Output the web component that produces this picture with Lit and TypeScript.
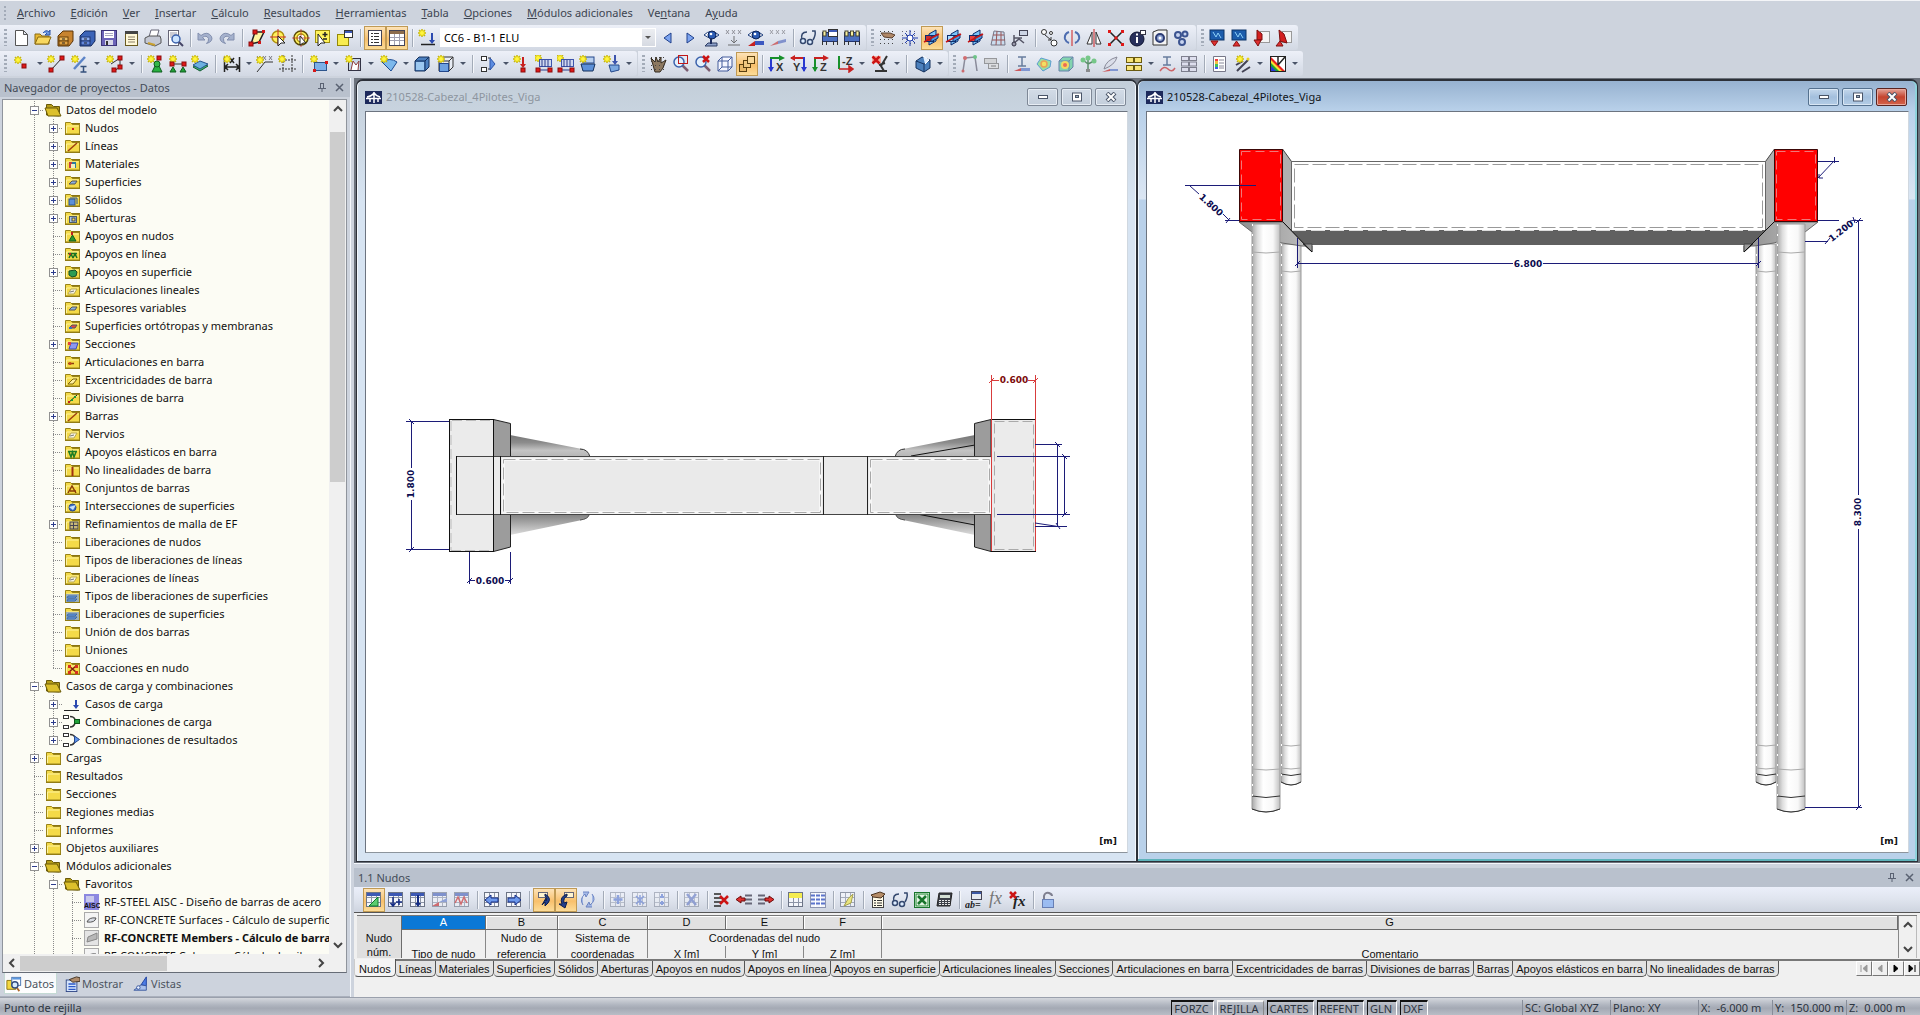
import { LitElement, html, css, svg, nothing } from 'lit';
import { customElement, property } from 'lit/decorators.js';
import { classMap } from 'lit/directives/class-map.js';
import { unsafeSVG } from 'lit/directives/unsafe-svg.js';

/* ---------- icon primitives, all on an 18 x 18 grid ---------- */
const p = (d: string, stroke = '#333', fill = 'none', w = 1) =>
  `<path d="${d}" stroke="${stroke}" fill="${fill}" stroke-width="${w}"/>`;
const b = (x: number, y: number, w: number, h: number, fill: string, stroke = 'none') =>
  `<rect x="${x}" y="${y}" width="${w}" height="${h}" fill="${fill}" stroke="${stroke}"/>`;
const c = (x: number, y: number, r: number, fill: string, stroke = 'none', w = 1) =>
  `<circle cx="${x}" cy="${y}" r="${r}" fill="${fill}" stroke="${stroke}" stroke-width="${w}"/>`;
const fade = (s: string, o = 0.45) => `<g opacity="${o}">${s}</g>`;
const star = (x = 4, y = 4) =>
  p(`M${x} ${y - 4}v8M${x - 4} ${y}h8M${x - 3} ${y - 3}l6 6M${x + 3} ${y - 3}l-6 6`, '#c4b414', 'none', 1.5) +
  c(x, y, 2.5, '#fff540', '#e4d410');
const dot = (x: number, y: number) => b(x - 2, y - 2, 4, 4, '#e01818', '#8c0c0c');
const arrow = (x: number, y: number, h: number, col = '#2b49b0') =>
  p(`M${x} ${y}v${h - 3}`, col, 'none', 2) + p(`M${x - 3} ${y + h - 4}h6l-3 4z`, 'none', col);
const supports = (col = '#22a038') => p('M1 17l3-5 3 5zM11 17l3-5 3 5z', '#0c5c1c', col);
const grid = b(1.5, 1.5, 14, 14, '#f4f6fb', '#6c7486') + p('M2 6.5h13M2 11.5h13M6.5 2v13M11.5 2v13', '#8c94a6');
const gridHead = grid + b(2, 2, 13, 3, '#3c58b4');
const lens = (x = 7, y = 7) => p(`M${x + 3} ${y + 3}l6 6`, '#7c5c70', 'none', 2.5) + c(x, y, 5, '#e4f0fc', '#3c62ac', 1.5);
const redX = (x: number, y: number, s = 4) => p(`M${x - s} ${y - s}l${s * 2} ${s * 2}M${x + s} ${y - s}l${-s * 2} ${s * 2}`, '#cc1414', 'none', 2.5);
const eye = p('M1 6q7-7 15 0q-7 6-15 0z', '#1c3c7c', '#fff') + c(9, 6, 4, '#2c5cb4', '#0c2458') + c(8, 5, 1.3, '#fff');
const xxx = p('M1 1l3 4M4 1l-3 4M7 1l3 4M10 1l-3 4M13 1l3 4M16 1l-3 4', '#7c7c84');
const glasses = p('M3 11q-2-8 5-8M14 11q3-5 2-9l-3 0', '#34486e', 'none', 1.5) + c(4, 12, 2.5, '#dcecff', '#34486e', 1.5) + c(11, 13, 2.5, '#dcecff', '#34486e', 1.5);
const cube = (col: string, edge: string) =>
  p('M2 6l4-4h10v10l-4 4h-10z', edge, col) + p('M2 6h10v10M12 6l4-4', edge);
const hash = (col = '#444') => p('M1 2.5h16M1 6.5h16M1 10.5h16M1 14.5h16', col, 'none', 1).replace('/>', ' stroke-dasharray="1 3"/>');
const planes = (front: string) =>
  p('M6 5l7-4v11l-7 4z', '#0c2c6c', '#7cc4f8') + b(2.5, 6.5, 8, 6, front, '#0c2c6c') + p('M8 8l7-3v4l-7 4z', '#0c2c6c', '#4c98e0') + p('M1 13l15-8', '#c81414', 'none', 1.5);
const cal = b(1.5, 3.5, 15, 9, '#4c70c0', '#22336c') + b(2, 2, 3, 5, '#f8f0a0', '#443') + b(7.5, 2, 3, 5, '#f8f0a0', '#443') + b(13, 2, 3, 5, '#f8f0a0', '#443') + p('M1.5 12v4M5.5 12v4M12.5 12v4M16.5 12v4', '#333');
const axes = (h: string, v: string, l: string, right = false) =>
  (right
    ? p('M1 3h13', h, 'none', 2) + p('M5 0l-5 3 5 3z', 'none', h) + p('M14 2v14', v, 'none', 2) + p('M11 12h6l-3 5z', 'none', v)
    : p('M3 2v14', v, 'none', 2) + p('M0 12h6l-3 5z', 'none', v) + p('M2 3h13', h, 'none', 2) + p('M11 0l6 3-6 3z', 'none', h)) +
  `<text x="${right ? 3 : 8}" y="16" font-family="Liberation Sans" font-size="11" font-weight="700" fill="#333">${l}</text>`;
const book = b(1, 1, 14, 10, '#1c5cac', '#0c3468') + p('M4 3l3 5 2-4 3 5', '#8cd0f8');

const ICONS: Record<string, string> = {
  blank: p('M3.5 1.5h8l4 4v11h-12zM11.5 1.5v4h4', '#555', '#fff'),
  open: p('M1 15V5h5l2 2h7v8z', '#8a6a10', '#e8b830') + p('M1 15l3-7h13l-3 7z', '#8a6a10', '#f8d860') + p('M9 4q3-4 6-1l1-2v5h-5l2-2', '#2c54a8', '#6c98e0'),
  cabA: p('M2 7l5-5h10v10l-4 5H2z', '#5a3408', '#c88430') + b(3, 8, 9, 4, '#f0bc60', '#6a4008') + b(3, 12, 9, 4, '#e0a040', '#6a4008') + p('M6 10h3M6 14h3', '#222'),
  cabB: p('M2 7l5-5h10v10l-4 5H2z', '#14285c', '#3c64b8') + b(3, 8, 9, 4, '#8cacf0', '#1c3470') + b(3, 12, 9, 4, '#6488dc', '#1c3470') + p('M6 10h3M6 14h3', '#222'),
  save: b(1.5, 1.5, 15, 15, '#6c64b8', '#3c3478') + b(4, 2, 10, 7, '#fff') + b(5, 11, 8, 5, '#d8d8e8') + b(6, 12, 2, 4, '#333') + p('M5 4.5h8M5 6.5h8', '#a8a8c0'),
  clip: b(3.5, 3.5, 12, 13, '#fff8d8', '#6a5a20') + p('M3 3.5h13', '#444', 'none', 3) + p('M6 8h7M6 10.5h7M6 13h7', '#8c8068'),
  print: p('M5 8l2-7h8l-2 7', '#667', '#fff') + p('M1 9l4-2h11l1 3v4l-6 3-10-3z', '#555', '#c4c8d4') + p('M4 14l7 2', '#c8a030', 'none', 2),
  preview: b(2.5, 1.5, 10, 15, '#fff', '#667') + p('M4 4h7M4 6h7M4 8h4', '#99a') + c(10, 10, 4, '#cce4ff', '#3c62ac', 1.5) + p('M13 13l4 4', '#446', 'none', 2),
  undo: fade(p('M2 4v7h7l-2.500-2.500q4-3 6 1q.5 3-2 5q7-2 5-7q-4-6-10.500-1z', '#5c6c94', '#8c9cc0'), 0.7),
  redo: fade(p('M16 4v7h-7l2.500-2.500q-4-3-6 1q-.5 3 2 5q-7-2-5-7q4-6 10.500-1z', '#5c6c94', '#8c9cc0'), 0.7),
  quad: p('M3 15l4-12 9 0-5 10z', '#222', '#fff6a0', 1.5) + dot(3, 15) + dot(7, 3) + b(14, 1, 3, 3, '#d01818') + b(10, 12, 3, 3, '#d01818'),
  target: c(8, 8, 6, '#fff35c', '#b09010', 1.5) + p('M8 0v16M0 8h16', '#c83030') + p('M8 7v10l3-3h4z', '#222', '#fff'),
  ring: c(9, 9, 7, '#fff35c', '#5c4c08', 1.5) + c(9, 9, 4, '#fff', '#b09010', 1.5) + p('M9 0v18M0 9h18', '#c83030', 'none', 0.7) + p('M8 7v9l3-2h3z', '#222', '#fff'),
  plusSel: b(1.5, 1.5, 14, 12, '#fff35c', '#a09010') + p('M11 3v5M8.500 5.500h5M9 10h4', '#222', 'none', 1.5) + p('M4 5v12l3-3h4z', '#222', '#fff'),
  folderWin: b(1.5, 5.5, 11, 11, '#f8ec50', '#948808') + b(8.5, 1.5, 8, 7, '#fff', '#333') + b(9, 2, 7, 2, '#3c58b4'),
  list: b(2.5, 1.5, 13, 15, '#fff', '#445') + p('M5 4.500h2M8 4.500h5M5 7.500h2M8 7.500h5M5 10.500h2M8 10.500h5M5 13.500h2M8 13.500h5', '#333'),
  tableA: b(1.5, 1.5, 15, 15, '#fff', '#445') + b(2, 2, 14, 3, '#8c6c4c') + p('M2 8.500h14M2 11.500h14M6.500 5v11M11.500 5v11', '#a0a0b0'),
  loadNew: star(4, 4) + p('M3 15.500h14', '#222', 'none', 1.5) + arrow(14, 4, 11),
  prev: p('M12 4v10l-7-5z', '#20408c', '#7ca4f0'),
  next: p('M6 4v10l7-5z', '#20408c', '#7ca4f0'),
  eyeLoad: eye + p('M5 14h9v3h-12z', '#2c3c64', '#8ca0c8') + p('M8 9v6', '#1c2c5c', 'none', 2),
  xxxA: fade(xxx + p('M3 16h12M9 7v7l-3-3M9 14l3-3', '#555'), 0.8),
  eyeRes: eye + p('M1 17l7-5v5z', 'none', '#c82020') + p('M8 12h9v4l-9 0z', 'none', '#3c58c0'),
  xxxB: fade(xxx + p('M1 17l8-5v3z', 'none', '#c83c3c') + p('M9 12l8-2v3l-8 2z', 'none', '#5c70c0'), 0.7),
  glasses,
  calWin: cal + b(7.5, 0.5, 9, 7, '#fff', '#333') + b(8, 1, 8, 2, '#3c58b4'),
  cal,
  handGrid: hash() + p('M2 4h9l5 2-3 3-8-1z', '#5a4030', '#b08868'),
  gridStar: hash('#667') + p('M9 1v16M1 9h16M4 4l10 10M14 4l-10 10', '#2440b0') + c(9, 9, 3, '#fff', '#2440b0'),
  planeA: planes('#c83030'),
  planeB: planes('#a8dcff'),
  planeC: planes('#e84040'),
  meshP: fade(p('M5 2l10 1 1 13-14 0z', '#667', '#c8dcf0') + p('M4 6h11M3 11h13M8 2l-1 14M12 3l0 13', '#8c3c3c'), 0.85),
  flow: b(8.5, 1.5, 8, 5, '#ccd4e4', '#445') + p('M3 6v9M3 9h8M2 15l6-5 5 4', '#556', 'none', 1.5) + c(3, 15, 2, '#99a', '#334'),
  moveC: c(3, 3, 2.5, '#fff', '#333') + c(13, 14, 3, '#fff', '#333') + c(10, 4, 1.5, '#fff', '#333') + p('M4 6l6 5M10 11l-3 0M10 11v-3', '#333'),
  rotate: p('M6 3q-5 2-4 7q1 3 4 4M12 3q5 2 4 7q-1 3-4 4', '#4c6cb0', 'none', 2) + p('M9 1v16', '#d02020', 'none', 1),
  mirror: p('M7 3v12h-5zM11 3v12h5z', '#333', '#fff') + p('M9 0v18', '#d02020'),
  xdots: p('M3 3l12 12M15 3l-12 12', '#222', 'none', 1.5) + [[1, 1], [14, 1], [1, 14], [14, 14], [7.5, 7.5]].map(([x, y]) => b(x, y, 3, 3, '#e01818')).join(''),
  info: c(8, 10, 7, '#28305c', '#0c1230') + p('M8 8v6M8 4.500v2', '#fff', 'none', 2) + b(11.5, 1.5, 5, 4, '#fff', '#334'),
  sheetGear: p('M2 3l5-2h9v15H2z', '#333', '#f4f4f4') + c(9, 9, 4, '#8ca0d0', '#2c3c74', 2) + c(9, 9, 1.5, '#fff'),
  gears: c(5, 6, 3, '#c8d4f0', '#3c5490', 2) + c(12, 5, 2.5, '#c8d4f0', '#3c5490', 2) + c(9, 13, 3, '#c8d4f0', '#3c5490', 2),
  bookD: book + p('M2 12h7l-3.500 5z', '#8c1010', '#e03030'),
  bookU: book + p('M2 17h7l-3.500-5z', '#8c1010', '#e03030'),
  cadD: b(7.5, 2.5, 9, 11, '#f4f4f4', '#999') + p('M4 1l5 4v6l-5 0z', '#7c1010', '#d42020') + p('M1 11h7l-3 6z', '#7c1010', '#e03030'),
  cadU: b(7.5, 2.5, 9, 11, '#f4f4f4', '#999') + p('M4 1l5 4 3 9-7-2z', '#7c1010', '#d42020') + p('M1 17h7l-3-5z', '#7c1010', '#e03030'),
  node: star(4, 5) + dot(10, 11),
  line: star(4, 4) + p('M4 15L15 3', '#222') + dot(4, 15) + dot(15, 3),
  member: star(4, 4) + p('M3 14L14 2', '#5c84c8', 'none', 2.5) + p('M9.500 11.500h6M9.500 17h6M12.500 11.500v5.500', '#34507c', 'none', 1.5),
  poly: star(4, 4) + p('M5 9l9-6v9l-6 4', '#333') + dot(14, 3) + dot(14, 12) + dot(8, 15),
  nodeSup: p('M10 7l5 10h-10z', '#0c5c1c', '#28b040') + c(10, 9, 3, '#34b848', '#0c5c1c') + star(4, 4) + dot(12, 3),
  lineSup: star(4, 4) + p('M3 9h12', '#333') + dot(3, 9) + dot(15, 9) + supports(),
  surfSup: p('M2 12l7-4 8 3-8 5z', '#145c34', '#3cb46c') + p('M2 10l7-4 8 3-8 5z', '#24548c', '#6cb0e0') + star(4, 4),
  dimH: p('M1.500 2v15M16.500 2v15M2 12h14M5 9l-3 3 3 3M13 9l3 3-3 3', '#222', 'none', 1.5) + p('M7 3l4 5M11 3l-4 5', '#222', 'none', 1.5) + star(4, 4),
  dimNote: xxx + p('M1 17l8-10h8', '#333') + star(4, 5),
  dashBox: p('M5 0v18M14 0v18M1 5h17M1 14h17', '#333').replace('/>', ' stroke-dasharray="2 1"/>') + star(4, 4),
  surf: star(4, 4) + b(4.5, 7.5, 12, 8, '#7cb0e8', '#2c548c') + b(3, 14, 3, 3, '#d81818') + b(15, 6, 3, 3, '#d81818'),
  opening: b(3.5, 3.5, 12, 12, '#c8d8e8', '#334') + p('M6 15l2-9 3 4 3-4-1 9', '#8c3c3c', '#fff') + star(4, 4),
  wedge: p('M2 7q8-5 15 0l-6 9z', '#1c4c94', '#7cb8ec') + star(4, 4),
  solid: cube('#4c80c0', '#14305c') + b(3, 7, 8, 8, '#9cc8f0'),
  solidNew: cube('#e8ecf4', '#333') + b(2.5, 8.5, 9, 8, '#6ca0e0', '#24488c') + star(4, 4),
  connect: b(1.5, 1.5, 5, 4, '#fff', '#333') + b(1.5, 12.5, 5, 4, '#fff', '#333') + p('M8 3h3M8 14h3', '#333') + p('M10 3l5 6-5 6z', '#2c54a8', '#5c8ce0', 1),
  loadPt: star(4, 4) + arrow(10, 2, 11, '#c82020') + dot(10, 15),
  loadLn: star(3, 3) + b(4.5, 4.5, 12, 7, '#d0d8f0', '#3c54ac') + p('M4 15h12M7 5v7M10 5v7M13 5v7', '#2c3c8c') + dot(3, 15) + dot(15, 15),
  loadBox: b(4, 2, 11, 6, '#b8d0f0', '#24488c') + p('M2 9h14l-2 7h-10z', '#14305c', '#5c90d8') + star(4, 4),
  loadSol: star(4, 4) + arrow(12, 0, 10, '#3c54ac') + p('M6 10h10v5l-8 2z', '#24488c', '#7ca8e0'),
  hand: p('M1 3l4 4 1-5 2 5 3-5 0 6 5-3-3 8-3 4h-5z', '#33291c', '#8c7860') + hash('#444'),
  zoomWin: lens() + b(6.5, 0.5, 9, 8, 'none', '#c01818'),
  zoomX: lens() + redX(12, 4, 3),
  wire: cube('#f4f6ff', '#445c9c') + p('M6 2v10h10M6 12l-4 4', '#445c9c'),
  cubes3: b(1.5, 9.5, 7, 7, '#e8b868', '#5a4010') + b(5.5, 5.5, 7, 7, '#f0c880', '#5a4010') + b(9.5, 1.5, 7, 7, '#f8d898', '#5a4010'),
  axX: axes('#18902c', '#2838d0', 'X'),
  axY: axes('#c82020', '#2838d0', 'Y', true),
  axZ: axes('#c82020', '#18902c', 'Z'),
  axmZ: p('M3 1v13', '#18902c', 'none', 2) + p('M3 14h12M13 11l4 3-4 3z', '#c82020', '#c82020', 1.5) + `<text x="6" y="10" font-family="Liberation Sans" font-size="11" font-weight="700" fill="#333">-Z</text>`,
  cutX: p('M16 1l-6 10 3 5M4 16h12M8 10l6-2', '#333', 'none', 2) + b(1, 1, 9, 7, '#f8b0a0') + redX(5, 5, 3.5),
  view3d: p('M2 6l6-4 8 3v8l-6 4-8-4z', '#14305c', '#4c80bc') + p('M2 6l8 3v8M10 9l6-4', '#14305c', 'none') + p('M9 1l6 4-4 4', '#fff', '#dcecff'),
  frame: fade(p('M2 16L4 3l10-1 2 14', '#667', 'none', 1.5) + c(4, 3, 2, '#c83c3c') + c(14, 2, 2, '#3cb45c') + c(2, 16, 1.5, '#c83c3c'), 0.7),
  tag: fade(b(1.5, 3.5, 12, 5, '#ccc', '#777') + b(5.5, 8.5, 10, 5, '#ddd', '#777') + p('M8 11h5', '#555'), 0.7),
  resI: fade(p('M5 2h8M5 11h8M9 2v9', '#34507c', 'none', 1.5) + p('M1 16l7-3v3z', 'none', '#c82020') + p('M8 13h9v3h-9z', 'none', '#5c78c8'), 0.7),
  resS: fade(p('M2 9l4-6 10 3-1 6-7 4z', '#3c8ccc', '#8ce08c') + c(9, 9, 3, '#f8e040', '#f09030', 1.5), 0.8),
  resV: fade(cube('#6cd0a0', '#4c6c9c') + c(8, 10, 3, '#f05030', '#f8d840', 2), 0.8),
  tree4: fade(p('M9 16V5M9 9l-5-4M9 9l6-3', '#3c7c4c', 'none', 1.5) + c(4, 5, 2.5, '#5cc070') + c(9, 3, 2.5, '#5cc070') + c(15, 6, 2.5, '#5cc070') + b(7, 14, 4, 3, '#777'), 0.8),
  wing: fade(p('M3 14q2-9 13-12-2 8-13 12z', '#667', '#d8dce8') + p('M1 17l8-3v2z', 'none', '#c82020') + p('M9 14h8v2h-8z', 'none', '#5c78c8'), 0.7),
  boxes4: [[1.5, 2.5], [9.5, 2.5], [1.5, 10.5], [9.5, 10.5]].map(([x, y]) => b(x, y, 7, 5, '#f8e478', '#6a5a10')).join(''),
  resJ: fade(p('M5 2h8M5 10h8M9 2v8', '#34507c', 'none', 1.5) + p('M2 16q4-6 8-2t7-1', '#c83030', 'none', 1.5), 0.7),
  wins: fade([1.5, 7, 12.5].map((y) => b(1.5, y, 7, 4, '#dde', '#556') + b(9.5, y, 7, 4, '#dde', '#556')).join(''), 0.7),
  sheetC: p('M3.500 1.500h12v15h-12z', '#778', '#fff') + b(5, 4, 3, 2, '#f04040') + b(5, 6, 3, 3, '#f0c040') + b(5, 9, 3, 3, '#40c060') + b(5, 12, 3, 2, '#4060f0') + p('M9 5h5M9 8h5M9 11h5M9 13h5', '#889'),
  wand: p('M3 16l11-11M8 17l8-5M2 10l7-4', '#445', 'none', 2) + star(6, 4) + c(14, 4, 1.5, '#e8d020'),
  rainbow: b(1.5, 1.5, 15, 15, '#fff', '#222') + p('M2 2l14 14h-5L2 6z', 'none', '#e82020') + p('M2 5l11 11h-4L2 9z', 'none', '#f8e030') + p('M2 8l8 8H6L2 12z', 'none', '#18a838') + p('M2 11l5 5H2z', 'none', '#2838d8') + p('M9 10l7-8M9 2v8', '#222', 'none', 1.5),
  tEdit: gridHead + p('M4 15L13 6v9z', '#0c7c28', '#5ccc70'),
  tIns: gridHead + p('M6 6v9M3.500 12l2.500 3 2.500-3M9 11h6M12 8v6', '#142c84', 'none', 1.5),
  tDown: gridHead + arrow(9, 4, 12, '#142c84'),
  tRes: fade(gridHead + p('M1 15l7-4v4z', 'none', '#c82020') + p('M8 11l8-4v4z', 'none', '#5c78c8'), 0.6),
  tWave: fade(gridHead + p('M2 12l3-6 3 7 3-7 3 6', '#c82020', 'none', 1.5), 0.6),
  tLeft: grid + p('M15 7v4h-7v3l-6-5 6-5v3z', '#142c84', '#6c98ec'),
  tRight: grid + p('M3 7v4h7v3l6-5-6-5v3z', '#142c84', '#6c98ec'),
  tCurveA: b(3.5, 1.5, 9, 5, '#fff4d0', '#667') + p('M10 3q7 4 3 9l-3 3 0-4 -3 3 4-7 0 3q2-3-1-5z', '#0c1c4c', '#24408c'),
  tCurveB: b(7.5, 1.5, 9, 5, '#fff4d0', '#667') + p('M10 3q-8 3-5 10h-3l6 4 2-6-3 1q-1-5 3-7z', '#0c1c4c', '#24408c'),
  tSync: fade(p('M4 14q-4-6 2-11l1 3 3-5h-6M13 3q5 6-2 11l-1-3-3 5h6', '#3c5cb0', '#8ca8e4'), 0.7),
  tA: fade(grid + p('M9 4v9M4.500 8.500h9', '#2c54c8', 'none', 2.5)),
  tB: fade(grid + p('M5 5l8 8M13 5l-8 8M9 4v10', '#2c54c8', 'none', 1.5)),
  tC: fade(grid + p('M9 3v4M9 10v4M7 6h4M7 12h4', '#2c54c8', 'none', 2)),
  tX: fade(grid + p('M4 3l9 11M13 3l-9 11', '#3450b4', 'none', 2.5)),
  tDel: fade(p('M1 3h7M1 7h7M1 11h7M1 15h7', '#333', 'none', 2), 0.8) + redX(11, 9, 4),
  tDelL: p('M10 4.500h7M10 8.500h7M10 12.500h7', '#667', 'none', 2) + p('M10 7v3h-4v2l-5-3.500 5-3.500v2z', '#6c0c0c', '#e03030'),
  tDelR: p('M1 4.500h7M1 8.500h7M1 12.500h7', '#667', 'none', 2) + p('M8 7v3h4v2l5-3.500-5-3.500v2z', '#6c0c0c', '#e03030'),
  tYel: grid + b(2, 2, 13, 5, '#f4ec50'),
  tBlu: b(1.5, 1.5, 15, 15, '#f4f6fb', '#8c94b0') + p('M2 4.500h14M2 8.500h14M2 12.500h14', '#5c74cc', 'none', 2) + p('M6.500 2v14M11.500 2v14', '#fff'),
  tPen: fade(grid + p('M5 15q4-9 9-12l-2 9z', '#8c8410', '#f0e850'), 0.7),
  tProp: b(3.5, 4.5, 11, 12, '#fffbe8', '#444') + p('M5 9.500h2M8 9.500h5M5 12h2M8 12h5M5 14.500h2M8 14.500h5', '#333') + p('M2 4l9-3 5 2-4 4-8-1z', '#4c3420', '#b48c68'),
  excel: b(1.5, 1.5, 15, 15, '#fff', '#18742c') + b(3, 3, 12, 12, '#e4f4e4', '#18842c') + p('M5 5l8 8M13 5l-8 8', '#18742c', 'none', 2.5),
  calc: p('M4 2h13l-2 13h-13z', '#222', '#3c4048') + b(5, 4, 10, 3, '#d4e0d4') + p('M4 9.500h11M4 11.500h11M4 13.500h11', '#e8e8e8').replace('/>', ' stroke-dasharray="2 1"/>'),
  abc: b(6.5, 0.5, 10, 8, '#e4e8f0', '#445') + b(7, 1, 9, 2, '#3c58a4') + `<text x="0" y="17" font-family="Liberation Serif" font-style="italic" font-weight="700" font-size="10" fill="#222">ab=</text>`,
  fx: `<text x="2" y="13" font-family="Liberation Serif" font-style="italic" font-size="18" fill="#777">fx</text>`,
  fxX: `<text x="4" y="15" font-family="Liberation Serif" font-style="italic" font-weight="700" font-size="15" fill="#222">fx</text>` + redX(4, 4, 3),
  lock: fade(p('M5 8V5q1-4 5-3 3 1 3 3', '#667', 'none', 2) + b(3.5, 8.5, 11, 8, '#8cb4f4', '#4c68a8'), 0.8),
  tabData: p('M1 5h5l1 2h4v8H1z', '#8a7008', '#f4d840') + b(6.5, 1.5, 10, 9, '#fff', '#3c6cac') + b(7, 2, 9, 2, '#5c98e0') + p('M12 13l3 4', '#b06828', 'none', 2) + c(10, 10, 3.5, '#d8ecff', '#334c7c', 1.5),
  tabShow: b(2.5, 4.5, 12, 13, '#d4e4fc', '#2c4484') + p('M5 9h8M5 12h8M5 15h8', '#2c58c8', 'none', 1.5) + p('M6 4l8-3 4 1v4l-8 1z', '#3c2c1c', '#b08c6c'),
  tabView: p('M9 10l6-9v10z', '#14389c', '#4c7ce4') + p('M1 16l8-6 6 1v5h-13z', '#34549c', '#a8c0ec') + c(6, 13, 2, '#e8f0ff', '#34549c'),
};

/* ---------- folder marks for the tree ---------- */
const folder = (mark = '') => b(2, 4, 15, 12, '#8a7410') + p('M2.500 15V3.500h5l2 2h7V15z', '#9a8418', '#f4da48') + p('M3.500 14V7h12', '#fdf3a0') + mark;
const openFolder = p('M2.500 14V3.500h5l2 2h6V15z', '#6a5a08', '#b49c18') + p('M4 15L1 7h12l4 8z', '#6a5a08', '#dcc02c');
const surfMark = (f: string) => p('M6 11l3-3h5l-2 3z', '#555', f);
const MARKS: Record<string, string> = {
  open: openFolder,
  plain: folder(),
  dot: folder(b(9, 9, 2, 2, '#d02020')),
  diag: folder(p('M5 14l9-8', '#a04010', 'none', 1.5)),
  mat: folder(b(6, 7, 3, 6, '#c84040') + b(9, 7, 4, 6, '#2c7c9c') + b(8, 9, 4, 4, '#f0f0c0')),
  surf: folder(surfMark('#8cb0e0')),
  solid: folder(b(6, 8, 6, 6, '#5c90d8', '#2c548c') + p('M7 7h7v6', '#2c548c', 'none', 1)),
  hole: folder(b(6.5, 7.5, 7, 6, '#a8c8e8', '#4c5c6c') + b(9, 9, 3, 3, '#f0e060', '#445')),
  nsup: folder(p('M9.500 8l3.500 6h-7z', '#145c1c', '#28982c') + b(8, 5, 2, 3, '#c02020')),
  lsup: folder(p('M5 8.500h9M6 13l2-4 2 4M10 13l2-4 2 4', '#1c7424', 'none', 1.5) + b(6, 8, 2, 2, '#c02020')),
  ssup: folder(p('M6 8l6-1 2 2-1 4-4 1-3-2z', '#144c24', '#2c9c54')),
  white: folder(p('M5 13l3-5h6l-3 5z', '#b8a850', '#f8f4e0') + p('M7 11l4-1', '#777')),
  mem: folder(surfMark('#e04848') + b(6, 10, 3, 2, '#3c70c0')),
  sect: folder(p('M6 14l2-6h7l-2 6z', '#3c4cb0', '#8c98f0') + b(5, 7, 3, 3, '#e04040')),
  hinge: folder(p('M5 10.500h6', '#8c3c10', 'none', 1.5) + c(7, 10.5, 1.5, '#c04818')),
  ecc: folder(p('M5 13l5-5 4 0-4 5z', '#7c6408', '#fff0a0')),
  div: folder(p('M5 14l9-8', '#222', 'none', 1) + b(8, 10, 2, 2, '#1c9c34') + b(11, 7, 2, 2, '#1c9c34') + b(5, 12, 2, 2, '#c02020')),
  elas: folder(p('M5 8.500h9M6 9l2 5 1.500-5 1.500 5 2-5', '#1c7c24', 'none', 1.5)),
  nonlin: folder(p('M9.500 6v9', '#a03010', 'none', 2)),
  set: folder(p('M5 14l4-7 4 7M7 12h6', '#8c3c08', 'none', 1.5)),
  inter: folder(c(9.5, 10.5, 3.5, '#3c70c8', '#24488c') + p('M6 10l7-2-3 5z', 'none', '#c8e0f8')),
  mesh: folder(b(7, 7, 8, 7, '#c8b878', '#445') + p('M7 10.500h8M10.500 7v7', '#445')),
  relS: folder(b(3, 7, 13, 8, '#9cb0b8') + p('M5 9h9l-2 2h-8zM5 12h9l-2 2h-8z', '#3c68a8', '#6ca0e0')),
  xx: folder(p('M6 7l7 6M13 7l-7 6', '#802010', 'none', 1.5) + b(5, 6, 3, 3, '#d83020') + b(12, 6, 3, 3, '#d83020') + b(5, 12, 3, 3, '#d83020') + b(12, 12, 3, 3, '#d83020')),
  load: p('M1 15.500h15', '#222') + arrow(13, 5, 9),
  comG: b(0.5, 2.5, 5, 3, '#fff', '#333') + b(0.5, 12.5, 5, 3, '#fff', '#333') + p('M7 3.500q4 0 5 3M7 14q4 0 5-4', '#333', 'none', 1.5) + b(11.5, 6.5, 5, 4, '#20a038', '#0c5418'),
  comB: b(0.5, 2.5, 5, 3, '#fff', '#333') + b(0.5, 12.5, 5, 3, '#fff', '#333') + p('M7 3.500q4 0 5 3M7 14q4 0 5-4', '#333', 'none', 1.5) + p('M11.500 5v7l5-3.500z', '#24488c', '#5c90e8'),
  aisc: b(2, 1, 15, 16, '#8c88e0') + b(4, 3, 8, 6, '#c8c8ec') + `<text x="2" y="15" font-family="Liberation Sans" font-weight="700" font-size="7" fill="#111">AISC</text>`,
  modS: b(2.5, 1.5, 14, 15, '#f4f4f4', '#aaa') + p('M5 11q2-5 9-4-1 5-9 4z', '#555', '#d8dce4'),
  modM: b(2.5, 1.5, 14, 15, '#e4e4e4', '#aaa') + p('M5 13l1-5 9-4v6z', '#888', '#b8b8b8'),
};

const ico = (body: string, size = 18) =>
  html`<svg class="ico" width=${size} height=${size} viewBox="0 0 18 18" aria-hidden="true">${unsafeSVG(body)}</svg>`;

/* Item syntax: "|" separator, "name+" drop-down, "name*" pressed. */
@customElement('tool-strip')
class ToolStrip extends LitElement {
  @property() items = '';
  @property({ type: Boolean }) grip = false;

  static styles = css`
    :host { display: flex; align-items: center; height: 25px; }
    .grip { width: 3px; height: 17px; margin: 0 3px 0 4px; background: repeating-linear-gradient(#a3abb8 0 2px, transparent 2px 4px); }
    button { font: inherit; border: 0; background: none; padding: 0; height: 24px; display: flex; align-items: center; justify-content: center; box-sizing: border-box; }
    .tool { width: 22px; }
    .drop { width: 24px; padding-left: 2px; }
    .more { width: 11px; }
    .more::after { content: ''; border: 3px solid transparent; border-top-color: #4a5468; border-bottom: 0; }
    .on { border: 1px solid #c09a54; background: linear-gradient(#fde3b8, #f8c06c 55%, #fcdc98); }
    .sep { width: 1px; height: 18px; margin: 0 3px 0 4px; background: #a3abb8; box-shadow: 1px 0 #f5f7fb; }
    svg { display: block; flex: none; }
  `;

  render() {
    return html`${this.grip ? html`<span class="grip"></span>` : nothing}
      ${this.items.split(' ').map((raw) => {
        if (raw === '|') return html`<span class="sep"></span>`;
        const name = raw.replace(/[+*]/, '');
        const drop = raw.endsWith('+');
        return html`<button class=${classMap({ tool: !drop, drop, on: raw.endsWith('*') })} aria-label=${name}>${ico(ICONS[name])}</button>
          ${drop ? html`<button class="more" aria-label="${name} menu"></button>` : nothing}`;
      })}`;
  }
}

@customElement('mdi-window')
class MdiWindow extends LitElement {
  @property() caption = '';
  @property({ type: Boolean, reflect: true }) active = false;

  static styles = css`
    :host { display: flex; flex-direction: column; flex: 1; min-width: 0; box-sizing: border-box; border: 1px solid #2c3038; border-top-width: 2px; border-radius: 7px 7px 0 0; padding: 0 8px 8px; background: linear-gradient(#c3ced9, #d7e4f2 120px); box-shadow: inset 1px 0 #f2f7fc, inset -1px 0 #f2f7fc; font: 11px/16px 'Noto Sans', 'Open Sans', sans-serif; }
    :host([active]) { background: linear-gradient(#97b2d0, #b9d1ea 30px, #dbe6f3 118px, #b9d1ea 119px); box-shadow: inset -2px 0 #8fd3dc, inset 0 -2px #5eb3ba, inset 1px 0 #eaf3fb; }
    header { display: flex; align-items: center; height: 30px; gap: 4px; padding: 2px 2px 0 0; box-sizing: border-box; color: #8d959f; }
    :host([active]) header { color: #101418; }
    h2 { font: inherit; margin: 0; flex: 1; }
    .logo { display: block; }
    .ctl { display: flex; gap: 3px; }
    .ctl button { width: 31px; height: 18px; padding: 0; border: 1px solid #7e8896; border-radius: 2px; background: linear-gradient(#d3dce7, #c3cedb); box-shadow: inset 0 0 0 1px #e7edf4; display: grid; place-items: center; }
    :host([active]) .ctl button { border-color: #55718f; background: linear-gradient(#c5d8ec, #a3bfdd 50%, #b4cde6); box-shadow: inset 0 0 0 1px #d8e6f4; }
    :host([active]) .ctl .close { border-color: #5a2420; background: linear-gradient(#e4a59a, #c4432e 50%, #d4644c); box-shadow: inset 0 0 0 1px #e8a89c; }
    .body { flex: 1; min-height: 0; background: #fff; border: 1px solid #6c7480; border-right-color: #d0d8e0; border-bottom-color: #8c949c; box-sizing: border-box; }
    ::slotted(svg) { display: block; width: 100%; height: 100%; }
  `;

  render() {
    return html`<header>
        <svg class="logo" width="17" height="13" viewBox="0 0 17 13" aria-hidden="true">
          <rect width="17" height="13" fill="#1d2a5c" />
          <path d="M1 7.500h15M9 1v11M2 6q5-1 7-4 2 3 6 4M5 8v3M13 8v3" stroke="#fff" fill="none" stroke-width="1.500" />
        </svg>
        <h2>${this.caption}</h2>
        <div class="ctl">
          <button aria-label="Minimizar"><svg width="12" height="6"><rect x="1.500" y="1.500" width="9" height="3" fill="#fff" stroke="#4a5568" /></svg></button>
          <button aria-label="Maximizar"><svg width="12" height="10"><rect x="1.500" y="1" width="9" height="8" fill="#fff" stroke="#4a5568" /><rect x="4.500" y="3.500" width="3" height="2" fill="#9ab" stroke="#4a5568" /></svg></button>
          <button class="close" aria-label="Cerrar"><svg width="12" height="10"><path d="M2 1l8 8M10 1l-8 8" stroke="#4a5568" stroke-width="4" /><path d="M2.500 1.500l7 7M9.500 1.500l-7 7" stroke="#fff" stroke-width="2" /></svg></button>
        </div>
      </header>
      <div class="body"><slot></slot></div>`;
  }
}

/* [depth, toggle, icon, label, last sibling?, bold?] */
type Node = [number, string, string, string, boolean?, boolean?];
const TREE: Node[] = [
  [0, '-', 'open', 'Datos del modelo'],
  [1, '+', 'dot', 'Nudos'],
  [1, '+', 'diag', 'Líneas'],
  [1, '+', 'mat', 'Materiales'],
  [1, '+', 'surf', 'Superficies'],
  [1, '+', 'solid', 'Sólidos'],
  [1, '+', 'hole', 'Aberturas'],
  [1, '', 'nsup', 'Apoyos en nudos'],
  [1, '', 'lsup', 'Apoyos en línea'],
  [1, '+', 'ssup', 'Apoyos en superficie'],
  [1, '', 'white', 'Articulaciones lineales'],
  [1, '', 'surf', 'Espesores variables'],
  [1, '', 'mem', 'Superficies ortótropas y membranas'],
  [1, '+', 'sect', 'Secciones'],
  [1, '', 'hinge', 'Articulaciones en barra'],
  [1, '', 'ecc', 'Excentricidades de barra'],
  [1, '', 'div', 'Divisiones de barra'],
  [1, '+', 'diag', 'Barras'],
  [1, '', 'white', 'Nervios'],
  [1, '', 'elas', 'Apoyos elásticos en barra'],
  [1, '', 'nonlin', 'No linealidades de barra'],
  [1, '', 'set', 'Conjuntos de barras'],
  [1, '', 'inter', 'Intersecciones de superficies'],
  [1, '+', 'mesh', 'Refinamientos de malla de EF'],
  [1, '', 'plain', 'Liberaciones de nudos'],
  [1, '', 'plain', 'Tipos de liberaciones de líneas'],
  [1, '', 'white', 'Liberaciones de líneas'],
  [1, '', 'relS', 'Tipos de liberaciones de superficies'],
  [1, '', 'relS', 'Liberaciones de superficies'],
  [1, '', 'plain', 'Unión de dos barras'],
  [1, '', 'plain', 'Uniones'],
  [1, '', 'xx', 'Coacciones en nudo', true],
  [0, '-', 'open', 'Casos de carga y combinaciones'],
  [1, '+', 'load', 'Casos de carga'],
  [1, '+', 'comG', 'Combinaciones de carga'],
  [1, '+', 'comB', 'Combinaciones de resultados', true],
  [0, '+', 'plain', 'Cargas'],
  [0, '', 'plain', 'Resultados'],
  [0, '', 'plain', 'Secciones'],
  [0, '', 'plain', 'Regiones medias'],
  [0, '', 'plain', 'Informes'],
  [0, '+', 'plain', 'Objetos auxiliares'],
  [0, '-', 'open', 'Módulos adicionales'],
  [1, '-', 'open', 'Favoritos'],
  [2, '', 'aisc', 'RF-STEEL AISC - Diseño de barras de acero'],
  [2, '', 'modS', 'RF-CONCRETE Surfaces - Cálculo de superficies'],
  [2, '', 'modM', 'RF-CONCRETE Members - Cálculo de barras', false, true],
  [2, '', 'modS', 'RF-CONCRETE Columns - Cálculo de pilares'],
];

@customElement('project-tree')
class ProjectTree extends LitElement {
  static styles = css`
    :host { display: block; overflow: hidden; }
    ul { list-style: none; margin: 0; padding: 1px 0 0 22px; }
    li { display: flex; align-items: center; height: 18px; white-space: nowrap; }
    .guide { position: relative; width: 19px; height: 18px; flex: none; display: grid; place-items: center;
      --dots: repeating-linear-gradient(#8a8a8a 0 1px, transparent 1px 2px);
      background: var(--dots) 9px 0 / 1px 100% no-repeat; }
    .tee { background: var(--dots) 9px 0 / 1px 100% no-repeat, repeating-linear-gradient(90deg, #8a8a8a 0 1px, transparent 1px 2px) 9px 9px / 10px 1px no-repeat; }
    .end { background: var(--dots) 9px 0 / 1px 9px no-repeat, repeating-linear-gradient(90deg, #8a8a8a 0 1px, transparent 1px 2px) 9px 9px / 10px 1px no-repeat; }
    button { width: 9px; height: 9px; padding: 0; border: 1px solid #919191; box-sizing: border-box;
      background: linear-gradient(#2c3c8c, #2c3c8c) center / 5px 1px no-repeat, #fff; }
    .plus { background: linear-gradient(#2c3c8c, #2c3c8c) center / 5px 1px no-repeat, linear-gradient(#2c3c8c, #2c3c8c) center / 1px 5px no-repeat, #fff; }
    svg { flex: none; margin-right: 4px; }
    .bold { font-weight: 700; }
  `;

  render() {
    return html`<ul role="tree">
      ${TREE.map(([depth, toggle, icon, label, last, bold]) => html`<li role="treeitem" aria-level=${depth + 1}>
        ${Array.from({ length: depth }, () => html`<span class="guide"></span>`)}
        <span class="guide ${last ? 'end' : 'tee'}">
          ${toggle ? html`<button class=${toggle === '+' ? 'plus' : 'minus'} aria-label="Alternar ${label}"></button>` : nothing}
        </span>
        ${ico(MARKS[icon])}<span class=${bold ? 'bold' : ''}>${label}</span>
      </li>`)}
    </ul>`;
  }
}

const NAVY = '#1c1c78';
const dim = (t: string, x: number, y: number, rot = 0, col = '#0c0c50') =>
  svg`<text x=${x} y=${y + 3} transform="rotate(${rot} ${x} ${y})" text-anchor="middle" fill=${col}
    font-family="DejaVu Sans, sans-serif" font-size="9" font-weight="700">${t}</text>`;

const planView = html`<svg viewBox="366 112 761 740" role="img" aria-label="Vista en planta">
  <defs>
    <linearGradient id="pu" x1="0" y1="0" x2="0" y2="1"><stop offset="0" stop-color="#777" /><stop offset=".35" stop-color="#8c8c8c" /><stop offset=".7" stop-color="#c4c4c4" /><stop offset="1" stop-color="#b4b4b4" /></linearGradient>
    <linearGradient id="pd" x1="0" y1="0" x2="0" y2="1"><stop offset="0" stop-color="#808080" /><stop offset=".4" stop-color="#a4a4a4" /><stop offset="1" stop-color="#dcdcdc" /></linearGradient>
  </defs>
  <path d="M510 435l72 14q6 1 8 8h-80z" fill="url(#pu)" /><path d="M580 449q8 0 10 8" stroke="#333" fill="none" />
  <path d="M510 535l72-15q6-1 8-6h-80z" fill="url(#pd)" /><path d="M580 520q8-1 9-5" stroke="#555" fill="none" />
  <path d="M975 435l-72 14q-6 1-8 8h80z" fill="url(#pu)" /><path d="M905 449q-8 0-10 8" stroke="#333" fill="none" />
  <path d="M975 535l-72-15q-6-1-8-6h80z" fill="url(#pd)" /><path d="M905 520q-8-1-9-5" stroke="#555" fill="none" />
  <path d="M911 456l64-11M917 514l58 11" stroke="#111" />
  <path d="M493.500 419.500l17 4v123.500l-17 4.500z" fill="#9c9c9c" stroke="#222" />
  <path d="M991 419.500l-16.500 4v123.500l16.500 4.500z" fill="#9c9c9c" stroke="#222" />
  <rect x="449.500" y="419.500" width="44" height="132" fill="#ebebeb" stroke="#111" />
  <path d="M451 421v129M452 420.500h40M451 550.500h42" stroke="#bbb" stroke-dasharray="10 4" />
  <rect x="456.500" y="456.500" width="535" height="58" fill="#eaeaea" stroke="#444" />
  <path d="M456.500 456v59M500.500 456v59M493.500 456v59" stroke="#111" />
  <path d="M823.500 456v59M867.500 456v59" stroke="#222" />
  <path d="M503.500 459.500h317v53h-317zM870.500 459.500h119v53h-119z" fill="none" stroke="#f6f6f6" stroke-width="3" />
  <path d="M503.500 459.500h317v53h-317zM870.500 459.500h119v53h-119z" fill="none" stroke="#a8a8a8" stroke-dasharray="12 4" />
  <rect x="991.500" y="419.500" width="44" height="132" fill="#ebebeb" stroke="#111" />
  <path d="M994.500 421.500h39v128h-39z" fill="none" stroke="#aaa" stroke-dasharray="10 4" />
  <path d="M991.500 375v176M1035.500 375v176M991 380.500h8M1028 380.500h8M989 383l5-5M1033 383l5-5" stroke="#d83c3c" fill="none" />
  <path d="M411.500 421v47M411.500 500v49M406 421.500h43M406 549.500h43M409 419l5 5M409 552l5-5M469.500 552v32M510.500 552v32M469 580.500h6M505 580.500h6M467 583l5-5M508 583l5-5M997 456.500h73M997 514.500h73M1064.500 456v58M1062 454l5 5M1062 517l5-5M1035 444.500h27M1057.500 444v82M1055 442l5 5M1035 523l23 3.500M1035 526.500h32M1056 523l4 6" stroke=${NAVY} fill="none" />
  ${dim('1.800', 411, 484, -90)} ${dim('0.600', 490, 581)} ${dim('0.600', 1014, 380, 0, '#7c0c0c')} ${dim('[m]', 1108, 841, 0, '#111')}
</svg>`;

const pile = (x: number, w: number, top: number, bottom: number, marks: number[], strong: number) => svg`
  <path d="M${x} ${top}h${w}V${bottom - 3}q${-w / 2} 6 ${-w} 0z" fill="url(#cyl)" stroke="#9a9a9a" />
  <path d="M${x} ${bottom - 3}q${w / 2} 6 ${w} 0M${x} ${strong}q${w / 2} 3 ${w} 0" fill="none" stroke="#333" />
  ${marks.map((y) => svg`<path d="M${x} ${y}q${w / 2} 2 ${w} 0" fill="none" stroke="#aaa" />`)}
  <path d="M${x + 0.5} ${top}V${bottom - 8}" stroke="#fff" stroke-dasharray="2 8" />`;

const frontView = html`<svg viewBox="1147 112 761 740" role="img" aria-label="Vista frontal">
  <defs>
    <linearGradient id="cyl"><stop offset="0" stop-color="#a8a8a8" /><stop offset=".2" stop-color="#dedede" /><stop offset=".4" stop-color="#fff" /><stop offset=".75" stop-color="#f8f8f8" /><stop offset="1" stop-color="#c0c0c0" /></linearGradient>
    <linearGradient id="under"><stop offset="0" stop-color="#909090" /><stop offset="1" stop-color="#c0c0c0" /></linearGradient>
  </defs>
  <path d="M1282.500 149l9 12.500v69l-9-8.500z" fill="#b0b0b0" stroke="#444" />
  <path d="M1774.500 149l-9 12.500v69l9-8.500z" fill="#b0b0b0" stroke="#444" />
  <rect x="1291.500" y="161.500" width="474" height="69" fill="#fff" stroke="#666" />
  <path d="M1294.500 164.500h468v63h-468z" fill="none" stroke="#999" stroke-dasharray="14 4" />
  <path d="M1290 230h477l-15 15h-448z" fill="#606060" /><path d="M1292 230.500h473" stroke="#ddd" stroke-dasharray="14 5" />
  ${pile(1281, 20, 244, 785, [271, 745, 768], 774)} ${pile(1756, 20, 244, 785, [271, 745, 768], 774)}
  <path d="M1239 222h44l29 30v-6h-10l-20-3-30-11z" fill="url(#under)" stroke="#666" />
  <path d="M1818 222h-44l-30 30v-6h10l20-3 31-11z" fill="url(#under)" stroke="#666" />
  <path d="M1312 252v-8h-9zM1744 252v-8h9z" fill="#999" stroke="#444" />
  <path d="M1283 222l29 30M1774 222l-30 30" stroke="#111" fill="none" />
  ${pile(1252, 28, 224, 812, [252, 769], 796)} ${pile(1777, 28, 224, 812, [252, 769], 796)}
  <path d="M1239.500 149.500h43v72h-43zM1774.500 149.500h43v72h-43z" fill="#f00" stroke="#3c0808" />
  <path d="M1241.500 151.500h39v68h-39zM1776.500 151.500h39v68h-39z" fill="none" stroke="#f07878" stroke-dasharray="9 5" />
  <path d="M1185 185.500h71M1190 186l9 8M1223 214l6 6M1225 220.500h14M1226 223l4-5M1297.500 238v30M1297 263.500h216M1543 263.500h216M1758.500 238v30M1295 266l5-5M1756 266l5-5M1818 161.500h21M1834.500 157v6M1834 161l-16 17M1819 174v4h4M1818 220.500h21M1805 241.500h23M1825 244l5-6M1850 221l6 -1M1853 217l2 6M1858.500 220v275M1858.500 529v279M1854 220.500h9M1856 223l5-5M1805 807.500h57M1856 810l5-5" stroke=${NAVY} fill="none" />
  ${dim('1.800', 1211, 205, 42)} ${dim('6.800', 1528, 264)} ${dim('1.200', 1841, 231, -38)} ${dim('8.300', 1858, 512, -90)} ${dim('[m]', 1889, 841, 0, '#111')}
</svg>`;

const MENU = ['_Archivo', '_Edición', '_Ver', '_Insertar', '_Cálculo', '_Resultados', '_Herramientas', '_Tabla', '_Opciones', '_Módulos adicionales', 'Ve_ntana', 'A_yuda'];
const TABS = ['Nudos', 'Líneas', 'Materiales', 'Superficies', 'Sólidos', 'Aberturas', 'Apoyos en nudos', 'Apoyos en línea', 'Apoyos en superficie', 'Articulaciones lineales', 'Secciones', 'Articulaciones en barra', 'Excentricidades de barras', 'Divisiones de barras', 'Barras', 'Apoyos elásticos en barra', 'No linealidades de barras'];

const chevron = (d: string) => html`<svg width="10" height="10" viewBox="0 0 10 10" aria-hidden="true"><path d=${d} fill="none" stroke="#444" stroke-width="2" /></svg>`;
const UP = 'M1 7l4-4 4 4';
const DOWN = 'M1 3l4 4 4-4';
const paneButtons = html`<button class="flat" aria-label="Fijar"><svg width="8" height="9" viewBox="0 0 8 9"><path d="M2.500 0v5M5.500 0v5M2 .5h4M0 5.500h8M4 6v3" stroke="#5a6272" fill="none" /></svg></button>
  <button class="flat" aria-label="Cerrar panel"><svg width="9" height="9" viewBox="0 0 9 9"><path d="M1 1l7 7M8 1l-7 7" stroke="#5a6272" stroke-width="1.500" /></svg></button>`;

@customElement('app-root')
class AppRoot extends LitElement {
  static styles = css`
    :host { display: flex; flex-direction: column; height: 100vh; min-height: 480px; overflow: hidden; background: #cdd3dd; color: #101010; font: 11px/16px 'Noto Sans', 'Open Sans', sans-serif; }
    button { font: inherit; color: inherit; padding: 0; border: 0; background: none; }
    .menu { display: flex; align-items: center; gap: 15px; height: 25px; box-sizing: border-box; border-top: 1px solid #f4f5f8; padding-left: 4px; color: #3c4450; }
    .menu .grip { width: 2px; height: 15px; margin-right: -4px; background: repeating-linear-gradient(#a3abb8 0 2px, transparent 2px 4px); }
    .bars { display: flex; gap: 1px; padding-bottom: 1px; }
    .bar { display: flex; align-items: center; height: 25px; padding-right: 3px; background: linear-gradient(#edf0f8, #dfe4ee 50%, #d2d8e3); border-radius: 0 3px 3px 0; }
    .combo { position: relative; display: flex; width: 216px; height: 19px; margin: 0 1px 0 2px; background: #fff; }
    .combo select { appearance: none; flex: 1; border: 0; background: none; font: inherit; padding: 0 20px 0 4px; color: #000; }
    .combo::before { content: ''; position: absolute; right: 1px; top: 1px; width: 13px; height: 17px; background: linear-gradient(#eceef2, #d6dae2); }
    .combo::after { content: ''; position: absolute; right: 5px; top: 8px; border: 3px solid transparent; border-top-color: #555; border-bottom: 0; }
    .main { flex: 1; min-height: 0; display: flex; gap: 3px; padding-top: 1px; }
    .side { width: 351px; flex: none; display: flex; flex-direction: column; border-right: 1px solid #f4f7fb; box-sizing: border-box; }
    .title { display: flex; align-items: center; gap: 9px; height: 19px; padding: 0 6px 0 4px; background: #b9c1cd; color: #444c58; }
    .title h2 { font: inherit; margin: 0; flex: 1; }
    .flat { display: grid; place-items: center; width: 9px; height: 11px; }
    .treebox { flex: 1; min-height: 0; margin: 2px 3px 0 2px; border: 1px solid #8f949c; border-bottom-color: #666c76; background: #fcfcf4; display: grid; grid-template: minmax(0, 1fr) 18px / minmax(0, 1fr) 17px; }
    .vbar { display: flex; flex-direction: column; align-items: center; background: #f0f0f0; color: #444; }
    .vbar button { width: 15px; height: 18px; display: grid; place-items: center; }
    .vthumb { width: 15px; height: 41%; margin: 14px 0 auto; background: #cdcdcd; }
    .hbar { grid-column: 1 / -1; display: flex; align-items: center; background: #f0f0f0; padding-right: 17px; }
    .hbar button { width: 17px; height: 17px; display: grid; place-items: center; }
    .hthumb { width: 45%; height: 15px; margin-right: auto; background: #cdcdcd; }
    .left svg { transform: rotate(-90deg); }
    .right svg { transform: rotate(90deg); }
    .sidetabs { display: flex; gap: 6px; height: 24px; padding: 0 4px; color: #4c5460; border-bottom: 1px solid #aab0bc; box-sizing: border-box; }
    .sidetabs button { display: flex; align-items: center; gap: 2px; padding: 1px 3px 0 1px; height: 21px; box-sizing: border-box; }
    .sidetabs .sel { background: linear-gradient(#f4f6f8, #fff); border: 1px solid #c4dad4; border-top: 0; padding: 1px 2px 0 1px; }
    .work { flex: 1; min-width: 0; display: flex; flex-direction: column; }
    .mdi { flex: 1; min-height: 0; display: flex; background: #6c727c; border-bottom: 1px solid #f4f7fb; padding: 1px 2px 1px 2px; }
    .data { margin-top: 4px; display: flex; flex-direction: column; background: #f0f0f0; height: 129px; }
    .data .title { padding-left: 4px; }
    .data .bar { padding-left: 9px; border-radius: 0; background: linear-gradient(#ebeffa, #dfe4ee 50%, #ced4df); border-bottom: 1px solid #555; }
    .grid { display: flex; height: 42px; flex: none; margin: 2px 3px 0; overflow: hidden; font: 11px/14px 'Liberation Sans', Arial, sans-serif; border-top: 1px solid #777; }
    table { flex: 1; align-self: flex-start; table-layout: fixed; width: 100%; border-collapse: separate; border-spacing: 0; }
    th { font-weight: 400; padding: 0; height: 16px; line-height: 16px; box-sizing: border-box; }
    .letters th { height: 14px; line-height: 13px; background: #e1e1e1; border-right: 1px solid #6c6c6c; border-bottom: 1px solid #6c6c6c; box-shadow: inset 1px 1px #fff; }
    .letters .sel { background: #0a78d6; color: #fff; box-shadow: none; }
    .letters .corner { vertical-align: top; padding-top: 15px; border-bottom: 0; background: #dfdfdf; line-height: 14px; box-shadow: none; }
    .names th { border-right: 1px solid #888; }
    .names th:last-child { border-right: 0; }
    .grid .vbar { width: 17px; border-left: 1px solid #888; border-right: 1px solid #bbb; justify-content: space-between; }
    .tabs { display: flex; flex: none; align-items: flex-start; margin: 1px 0 0; border-top: 2px solid #777; font: 11px/14px 'Liberation Sans', Arial, sans-serif; }
    .tabs button { height: 16px; padding: 0 3px; white-space: nowrap; background: #e3e3e3; border: 1px solid #555; border-top: 0; border-left: 0; border-radius: 0 0 5px 4px; box-sizing: border-box; }
    .tabs .sel { background: #f4f4f4; margin-top: -2px; height: 18px; border-left: 1px solid #ccc; padding: 2px 4px 0 4px; }
    .nav { margin-left: auto; display: flex; }
    .nav button { width: 16px; height: 15px; padding: 0; border: 1px solid #fff; border-right-color: #777; border-bottom-color: #777; border-radius: 0; background: #f0f0f0; display: grid; place-items: center; }
    .status { display: flex; align-items: center; height: 18px; box-sizing: border-box; border-top: 1px solid #9aa0ac; padding: 2px 18px 0 4px; background: linear-gradient(#d4d7dd, #b1b6c0 40%, #a4a9b4 60%, #b9bdc6); color: #2c3440; white-space: nowrap; }
    .status .msg { margin-right: auto; }
    .modes { display: flex; gap: 3px; margin-right: 94px; }
    .modes button { height: 16px; padding: 0 4px 0 2px; border: 1px solid #fff; border-left-color: #111; border-top: 2px solid #111; line-height: 13px; box-sizing: border-box; }
    .modes .up { border-color: #f4f4f4 #888 #888 #f4f4f4; line-height: 11px; }
    .cell { box-sizing: border-box; border-left: 1px solid #878d99; padding-left: 2px; }
    .sc { width: 88px; } .coord { width: 74px; display: flex; gap: 6px; }
    .coord.z { width: 56px; }
  `;

  render() {
    return html`
      <nav class="menu"><span class="grip"></span>
        ${MENU.map((m) => {
          const i = m.indexOf('_');
          return html`<button>${m.slice(0, i)}<u>${m[i + 1]}</u>${m.slice(i + 2)}</button>`;
        })}
      </nav>
      <div class="bars">
        <div class="bar">
          <tool-strip grip items="blank open cabA cabB save clip print preview | undo redo | quad target ring plusSel folderWin | list* tableA* | loadNew"></tool-strip>
          <label class="combo"><select aria-label="Caso de carga"><option>CC6 - B1-1 ELU</option></select></label>
          <tool-strip items="prev next eyeLoad xxxA eyeRes xxxB | glasses calWin cal"></tool-strip>
        </div>
        <div class="bar"><tool-strip grip items="handGrid gridStar planeA* planeB planeC meshP flow | moveC rotate mirror xdots info sheetGear gears"></tool-strip></div>
        <div class="bar"><tool-strip grip items="bookD bookU cadD cadU"></tool-strip></div>
      </div>
      <div class="bars">
        <div class="bar"><tool-strip grip items="node+ line member+ poly+ | nodeSup lineSup surfSup | dimH+ dimNote dashBox | surf+ opening+ wedge+ solid solidNew+ | connect+ loadPt loadLn loadLn loadBox loadSol+"></tool-strip></div>
        <div class="bar"><tool-strip grip items="hand zoomWin zoomX wire cubes3* | axX axY axZ axmZ+ cutX+ | view3d+"></tool-strip></div>
        <div class="bar"><tool-strip grip items="frame tag | resI resS resV tree4 wing boxes4+ resJ wins | sheetC wand+ rainbow+"></tool-strip></div>
      </div>
      <div class="main">
        <aside class="side">
          <div class="title"><h2>Navegador de proyectos - Datos</h2>${paneButtons}</div>
          <div class="treebox">
            <project-tree></project-tree>
            <div class="vbar"><button aria-label="Subir">${chevron(UP)}</button><div class="vthumb"></div><button aria-label="Bajar">${chevron(DOWN)}</button></div>
            <div class="hbar"><button class="left" aria-label="Izquierda">${chevron(UP)}</button><div class="hthumb"></div><button class="right" aria-label="Derecha">${chevron(UP)}</button></div>
          </div>
          <div class="sidetabs">
            <button class="sel">${ico(ICONS.tabData, 16)}Datos</button>
            <button>${ico(ICONS.tabShow, 16)}Mostrar</button>
            <button>${ico(ICONS.tabView, 16)}Vistas</button>
          </div>
        </aside>
        <section class="work">
          <div class="mdi">
            <mdi-window caption="210528-Cabezal_4Pilotes_Viga">${planView}</mdi-window>
            <mdi-window active caption="210528-Cabezal_4Pilotes_Viga">${frontView}</mdi-window>
          </div>
          <div class="data">
            <div class="title"><h2>1.1 Nudos</h2>${paneButtons}</div>
            <div class="bar"><tool-strip items="tEdit* tIns tDown tRes tWave | tLeft tRight | tCurveA* tCurveB* tSync | tA tB tC | tX | tDel tDelL tDelR | tYel tBlu | tPen | tProp glasses excel calc | abc fx fxX | lock"></tool-strip></div>
            <div class="grid">
              <table>
                <colgroup><col width="45" /><col width="84" /><col width="72" /><col width="90" /><col width="78" /><col width="78" /><col width="78" /><col /></colgroup>
                <thead>
                  <tr class="letters"><th class="corner" rowspan="3">Nudo<br />núm.</th><th class="sel">A</th><th>B</th><th>C</th><th>D</th><th>E</th><th>F</th><th>G</th></tr>
                  <tr class="names"><th></th><th>Nudo de</th><th>Sistema de</th><th colspan="3">Coordenadas del nudo</th><th></th></tr>
                  <tr class="names"><th>Tipo de nudo</th><th>referencia</th><th>coordenadas</th><th>X [m]</th><th>Y [m]</th><th>Z [m]</th><th>Comentario</th></tr>
                </thead>
              </table>
              <div class="vbar"><button aria-label="Subir">${chevron(UP)}</button><button aria-label="Bajar">${chevron(DOWN)}</button></div>
            </div>
            <div class="tabs">
              ${TABS.map((t, i) => html`<button class=${i ? '' : 'sel'}>${t}</button>`)}
              <div class="nav">
                ${[['M2 1v7M8 1L4 4.500 8 8z', '#999'], ['M7 1L3 4.500 7 8z', '#999'], ['M3 1l4 3.500L3 8z', '#000'], ['M2 1l4 3.500L2 8zM8 1v7', '#000']].map(
                  ([d, col], i) => html`<button aria-label="Ficha ${i + 1}"><svg width="10" height="9"><path d=${d} fill=${col} stroke=${col} /></svg></button>`
                )}
              </div>
            </div>
          </div>
        </section>
      </div>
      <footer class="status">
        <span class="msg">Punto de rejilla</span>
        <div class="modes">${['FORZC', 'REJILLA', 'CARTES', 'REFENT', 'GLN', 'DXF'].map((m) => html`<button class=${m === 'REJILLA' ? 'up' : ''}>${m}</button>`)}</div>
        <span class="cell sc">SC: Global XYZ</span><span class="cell sc">Plano: XY</span>
        <span class="cell coord"><span>X:</span><span>-6.000 m</span></span>
        <span class="cell coord"><span>Y:</span><span>150.000 m</span></span>
        <span class="cell coord z"><span>Z:</span><span>0.000 m</span></span>
      </footer>`;
  }
}
